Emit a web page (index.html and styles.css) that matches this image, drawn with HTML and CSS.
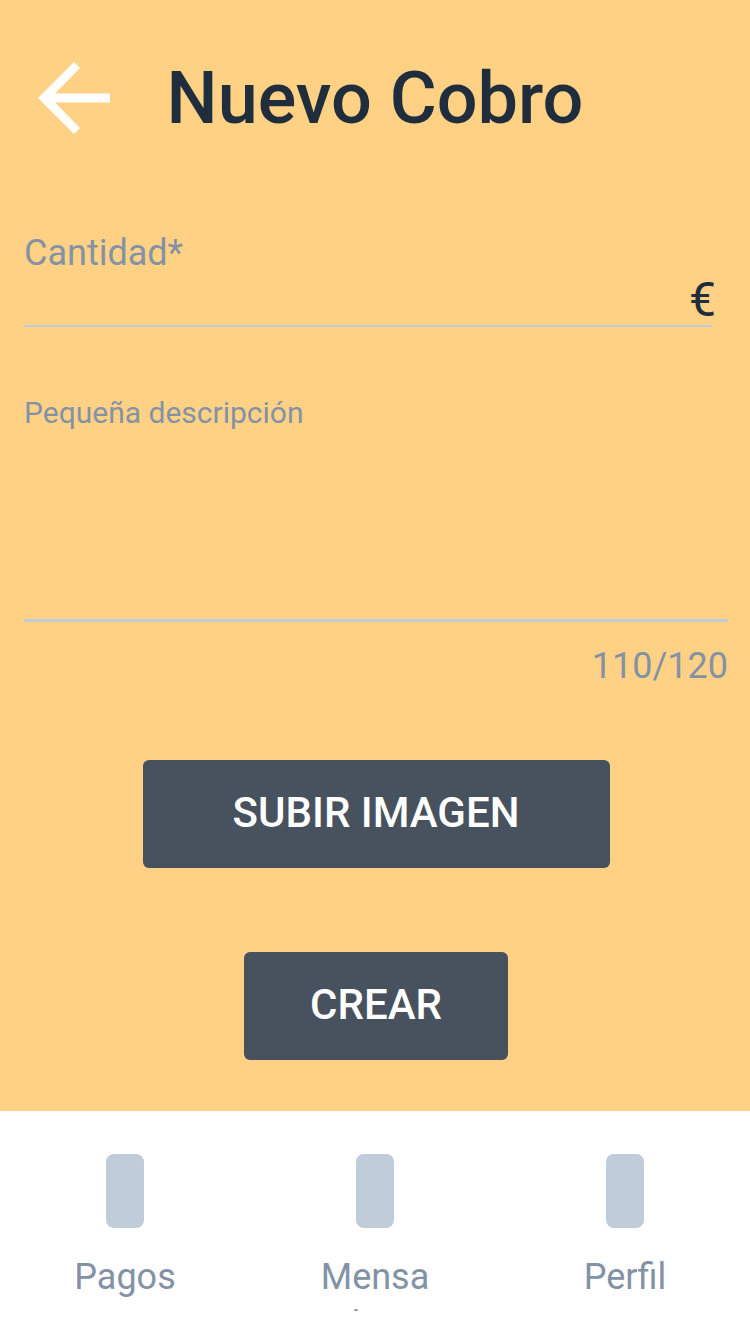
FILE: index.html
```html
<!DOCTYPE html>
<html lang="es">
<head>
<meta charset="utf-8">
<meta name="viewport" content="width=device-width, initial-scale=1">
<title>Nuevo Cobro</title>
<link rel="stylesheet" href="styles.css">
</head>
<body class="page">
  <header class="header">
    <button class="back" type="button" aria-label="Volver">
      <svg class="back-icon" viewBox="0 0 72 72" aria-hidden="true">
        <path d="M36 0L42 6L17 31.500H72V40.500H17L42 66L36 72L0 36Z" fill="#fff"/>
      </svg>
    </button>
    <h1 class="title">Nuevo Cobro</h1>
  </header>
  <main class="main">
    <form class="form">
      <div class="field">
        <label class="label" for="amount">Cantidad*</label>
        <div class="amount">
          <input class="input" id="amount" type="text" inputmode="decimal" required>
          <span class="currency">€</span>
        </div>
      </div>
      <div class="field field-description">
        <label class="label label-small" for="description">Pequeña descripción</label>
        <textarea class="textarea" id="description" maxlength="120"></textarea>
        <span class="counter">110/120</span>
      </div>
      <div class="actions">
        <button class="button button-wide" type="button">SUBIR IMAGEN</button>
        <button class="button" type="button">CREAR</button>
      </div>
    </form>
  </main>
  <nav class="tabs">
    <a class="tab" href="#pagos"><span class="tab-icon"></span><span class="tab-label">Pagos</span></a>
    <a class="tab" href="#mensajes"><span class="tab-icon"></span><span class="tab-label">Mensajes</span></a>
    <a class="tab" href="#perfil"><span class="tab-icon"></span><span class="tab-label">Perfil</span></a>
  </nav>
</body>
</html>
```
FILE: styles.css
```css
* {
  box-sizing: border-box;
}

.page {
  margin: 0;
  min-height: 100vh;
  display: flex;
  flex-direction: column;
  background: #ffd184;
  color: #1f2d3d;
  font-family: Roboto, "Liberation Sans", sans-serif;
}

.header {
  display: grid;
  grid-template-columns: 72px 1fr 72px;
  align-items: start;
  padding: 58px 38px 0;
}

.back {
  width: 72px;
  height: 80px;
  padding: 0;
  border: 0;
  background: none;
  cursor: pointer;
}

.back-icon {
  display: block;
  width: 100%;
}

.title {
  margin: 0;
  font-size: 72px;
  line-height: 82px;
  font-weight: 500;
  text-align: center;
}

.main {
  flex: 1;
  padding: 92px 22px 50px 24px;
}

.field {
  display: flex;
  flex-direction: column;
}

.field-description {
  margin-top: 68px;
}

.label,
.counter {
  color: #8492a6;
  font-size: 36px;
  line-height: 42px;
}

.label-small {
  font-size: 30px;
  line-height: 36px;
}

.amount {
  position: relative;
  margin-right: 16px;
}

.input,
.textarea {
  display: block;
  width: 100%;
  border: 0;
  border-bottom: 2px solid #c0ccda;
  border-radius: 0;
  padding: 0;
  background: none;
  color: inherit;
  font: inherit;
  font-size: 36px;
  outline: none;
}

.input {
  height: 53px;
  padding-right: 32px;
}

.textarea {
  height: 191px;
  border-bottom-width: 3px;
  resize: none;
}

.currency {
  position: absolute;
  top: 0;
  right: -4px;
  font-size: 48px;
  line-height: 52px;
}

.counter {
  margin-top: 23px;
  text-align: right;
}

.actions {
  display: flex;
  flex-direction: column;
  align-items: center;
  gap: 84px;
  margin-top: 73px;
}

.button {
  min-width: 264px;
  height: 108px;
  padding: 0 24px 4px;
  border: 0;
  border-radius: 6px;
  background: #47525e;
  color: #fff;
  font: inherit;
  font-size: 42px;
  font-weight: 500;
  cursor: pointer;
}

.button-wide {
  min-width: 467px;
}

.tabs {
  display: grid;
  grid-template-columns: repeat(3, 1fr);
  padding: 43px 0 23px;
  background: #fff;
}

.tab {
  display: flex;
  flex-direction: column;
  align-items: center;
  gap: 26px;
  color: #8492a6;
  text-decoration: none;
}

.tab-icon {
  width: 38px;
  height: 74px;
  border-radius: 8px;
  background: #c0ccda;
}

.tab-label {
  width: 112px;
  height: 57px;
  overflow: hidden;
  overflow-wrap: anywhere;
  font-size: 36px;
  line-height: 46px;
  text-align: center;
}
```
